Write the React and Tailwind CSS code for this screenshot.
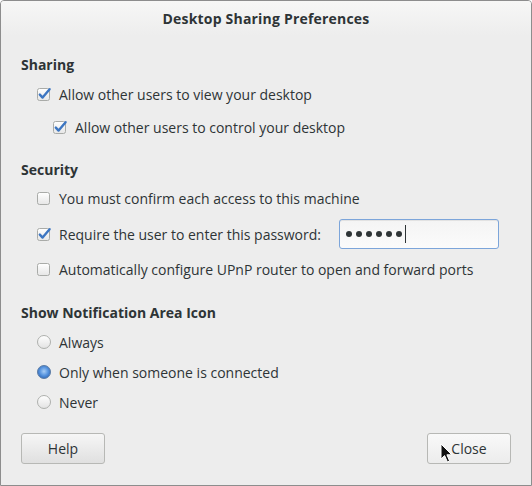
import React from 'react';

const font = { fontFamily: '"Open Sans", "Noto Sans", "DejaVu Sans", sans-serif' };

function CheckBox({ checked }) {
  return (
    <svg width="16" height="16" viewBox="0 0 16 16" className="shrink-0">
      <defs>
        <linearGradient id="cbg" x1="0" y1="0" x2="0" y2="1">
          <stop offset="0" stopColor="#ffffff" />
          <stop offset="1" stopColor="#e6e6e6" />
        </linearGradient>
      </defs>
      <rect x="1.5" y="2.5" width="12" height="12" rx="2" fill="url(#cbg)" stroke="#a9aba8" />
      {checked && (
        <path
          d="M3.8 8.6 L6.6 11.6 L13.6 3.2"
          fill="none"
          stroke="#3d76c2"
          strokeWidth="2.4"
          strokeLinecap="round"
          strokeLinejoin="round"
        />
      )}
    </svg>
  );
}

function Radio({ checked }) {
  return (
    <svg width="16" height="16" viewBox="0 0 16 16" className="shrink-0">
      <defs>
        <linearGradient id="rbg" x1="0" y1="0" x2="0" y2="1">
          <stop offset="0" stopColor="#ffffff" />
          <stop offset="1" stopColor="#e2e2e2" />
        </linearGradient>
        <radialGradient id="rbs" cx="0.5" cy="0.45" r="0.55">
          <stop offset="0" stopColor="#a8cdf5" />
          <stop offset="0.55" stopColor="#5b97e0" />
          <stop offset="1" stopColor="#2f6bbd" />
        </radialGradient>
      </defs>
      <circle cx="8" cy="8" r="6.5" fill={checked ? 'url(#rbs)' : 'url(#rbg)'} stroke={checked ? '#5f7ea5' : '#aeb0ad'} />
    </svg>
  );
}

function CheckRow({ checked, children, indent }) {
  return (
    <div className={`flex items-center h-[30px] gap-[7px] ${indent ? 'pl-[31px]' : 'pl-[15px]'}`}>
      <CheckBox checked={checked} />
      <span>{children}</span>
    </div>
  );
}

function RadioRow({ checked, children }) {
  return (
    <div className="flex items-center h-[30px] gap-[7px] pl-[15px]">
      <Radio checked={checked} />
      <span>{children}</span>
    </div>
  );
}

function Cursor() {
  return (
    <svg width="14" height="22" viewBox="0 0 14 22" className="absolute left-[12px] top-[9px]">
      <path d="M1 1 L1 16 L4.6 12.6 L7.4 19 L9.6 18 L6.9 11.8 L11.8 11.8 Z" fill="#111" stroke="#fff" strokeWidth="1" strokeLinejoin="round" />
    </svg>
  );
}

export default function App() {
  return (
    <div className="w-[532px] h-[486px] bg-[#ededed] text-[#2e3436] text-[14px] border border-[#8d8d8d] rounded-t-[4px] flex flex-col overflow-hidden" style={font}>
      {/* title */}
      <div className="h-[35px] flex items-center justify-center bg-gradient-to-b from-[#f7f7f6] to-[#ededed] font-bold tracking-[0.2px]">
        Desktop Sharing Preferences
      </div>

      <div className="flex flex-col pl-[20px] pr-[19px] pt-[18px]">
        <div className="h-[20px] flex items-center font-bold">Sharing</div>
        <div className="mt-[5px]">
          <CheckRow checked>Allow other users to view your desktop</CheckRow>
        </div>
        <div className="mt-[3px]">
          <CheckRow checked indent>Allow other users to control your desktop</CheckRow>
        </div>

        <div className="mt-[17px] h-[20px] flex items-center font-bold">Security</div>
        <div className="mt-[4px]">
          <CheckRow>You must confirm each access to this machine</CheckRow>
        </div>
        <div className="mt-[3px] h-[36px] flex items-center">
          <div className="flex items-center gap-[7px] pl-[15px] w-[318px]">
            <CheckBox checked />
            <span>Require the user to enter this password:</span>
          </div>
          <div className="w-[160px] h-[30px] -mt-[1px] border border-[#7ca5da] rounded-[3px] bg-gradient-to-b from-[#f4f4f4] to-[#fbfbfb] flex items-center pl-[6px] gap-[4px] shadow-[inset_0_1px_0_#e2e2e2]">
            <span className="w-[6px] h-[6px] rounded-full bg-[#2e3436]" />
            <span className="w-[6px] h-[6px] rounded-full bg-[#2e3436]" />
            <span className="w-[6px] h-[6px] rounded-full bg-[#2e3436]" />
            <span className="w-[6px] h-[6px] rounded-full bg-[#2e3436]" />
            <span className="w-[6px] h-[6px] rounded-full bg-[#2e3436]" />
            <span className="w-[6px] h-[6px] rounded-full bg-[#2e3436]" />
            <span className="w-[1px] h-[18px] bg-[#2e3436] -ml-[1px]" />
          </div>
        </div>
        <div className="mt-[2px]">
          <CheckRow>Automatically configure UPnP router to open and forward ports</CheckRow>
        </div>

        <div className="mt-[18px] h-[20px] flex items-center font-bold">Show Notification Area Icon</div>
        <div className="mt-[5px]">
          <RadioRow>Always</RadioRow>
          <RadioRow checked>Only when someone is connected</RadioRow>
          <RadioRow>Never</RadioRow>
        </div>

        <div className="mt-[16px] flex justify-between pr-[1px]">
          <button className="w-[84px] h-[31px] border border-[#b7b8b5] rounded-[3px] bg-gradient-to-b from-[#f6f6f6] to-[#e0e0e0] text-[#2e3436]">
            Help
          </button>
          <button className="relative w-[84px] h-[31px] border border-[#b7b8b5] rounded-[3px] bg-gradient-to-b from-[#f9f9f9] to-[#ececec] text-[#2e3436]">
            Close
            <Cursor />
          </button>
        </div>
      </div>
    </div>
  );
}
